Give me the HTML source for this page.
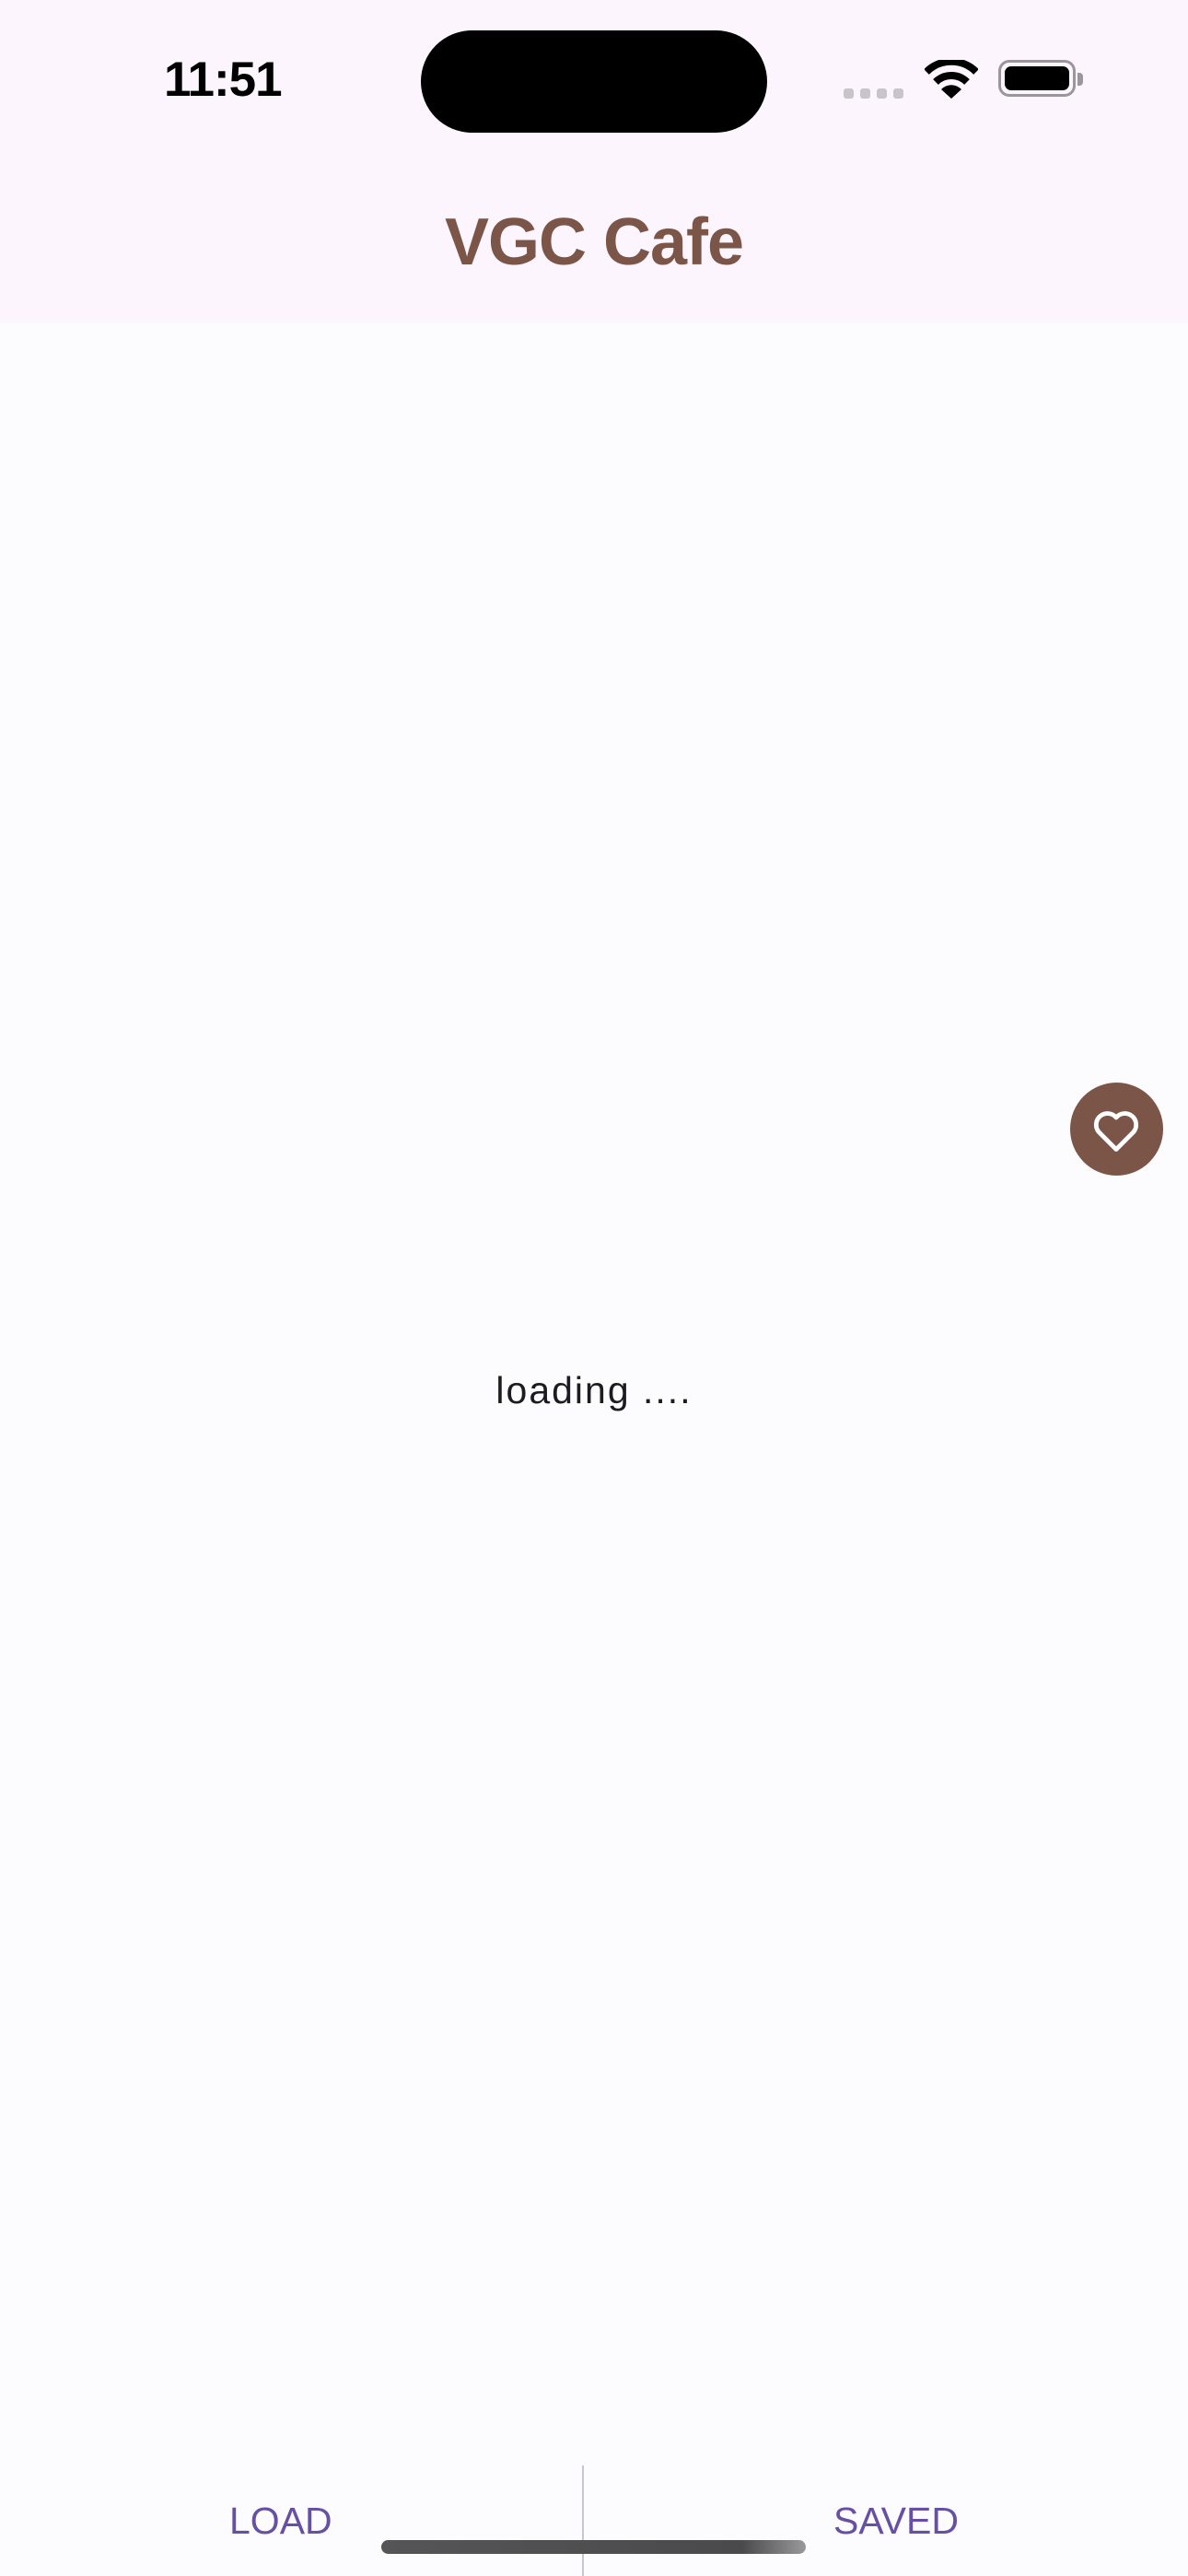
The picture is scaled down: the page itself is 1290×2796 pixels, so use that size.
<!DOCTYPE html>
<html><head><meta charset="utf-8"><style>
html,body{margin:0;padding:0}
body{width:1290px;height:2796px;background:#fcfbfe;position:relative;overflow:hidden;font-family:"Liberation Sans",sans-serif}
.hdr{position:absolute;left:0;top:0;width:1290px;height:350px;background:#fdf5fd}
.abs{position:absolute}
</style></head><body>
<div class="hdr"></div>
<div class="abs" style="left:457px;top:33px;width:376px;height:111px;background:#000;border-radius:56px"></div>
<div class="abs" style="left:178px;top:56px;font-size:53px;font-weight:bold;color:#000;letter-spacing:-1px">11:51</div>
<div class="abs" style="left:916px;top:96px;width:11px;height:11px;background:#c8c4ca;border-radius:3px"></div>
<div class="abs" style="left:934px;top:96px;width:11px;height:11px;background:#c8c4ca;border-radius:3px"></div>
<div class="abs" style="left:952px;top:96px;width:11px;height:11px;background:#c8c4ca;border-radius:3px"></div>
<div class="abs" style="left:970px;top:96px;width:11px;height:11px;background:#c8c4ca;border-radius:3px"></div>
<svg class="abs" style="left:1004px;top:65px" width="58" height="42" viewBox="0 0 58 42">
<path d="M2 13 A38 38 0 0 1 56 13" stroke="#000" stroke-width="8" fill="none"/>
<path d="M12 24 A24 24 0 0 1 46 24" stroke="#000" stroke-width="8" fill="none"/>
<path d="M29 42 L18 32 A15 15 0 0 1 40 32 Z" fill="#000"/>
</svg>
<div class="abs" style="left:1084px;top:65px;width:78px;height:34px;border:3px solid #9a969c;border-radius:12px"></div>
<div class="abs" style="left:1091px;top:72px;width:70px;height:26px;background:#000;border-radius:7px"></div>
<div class="abs" style="left:1170px;top:79px;width:6px;height:14px;background:#9a969c;border-radius:0 4px 4px 0"></div>
<div class="abs" style="left:0;top:222px;width:1290px;text-align:center;font-size:72px;font-weight:bold;color:#7a5548;letter-spacing:-1px">VGC Cafe</div>
<div class="abs" style="left:1162px;top:1175px;width:101px;height:101px;border-radius:50%;background:#7a5548"></div>
<svg class="abs" style="left:1182px;top:1198px" width="60" height="58" viewBox="0 0 24 24">
<path d="M12 20.5 L4.2 12.7 A4.6 4.6 0 0 1 12 6.2 A4.6 4.6 0 0 1 19.8 12.7 Z" stroke="#fff" stroke-width="2" fill="none" stroke-linejoin="round"/>
</svg>
<div class="abs" style="left:0;top:1486px;width:1290px;text-align:center;font-size:41px;color:#1c1b1f;letter-spacing:2px">loading ....</div>
<div class="abs" style="left:632px;top:2676px;width:2px;height:120px;background:#c9c6cf"></div>
<div class="abs" style="left:249px;top:2713px;font-size:41px;color:#6750a4">LOAD</div>
<div class="abs" style="left:905px;top:2713px;font-size:41px;color:#6750a4">SAVED</div>
<div class="abs" style="left:414px;top:2757px;width:461px;height:15px;border-radius:8px;background:linear-gradient(90deg,#555 0%,#4a4a4a 85%,#999 100%)"></div>
</body></html>
